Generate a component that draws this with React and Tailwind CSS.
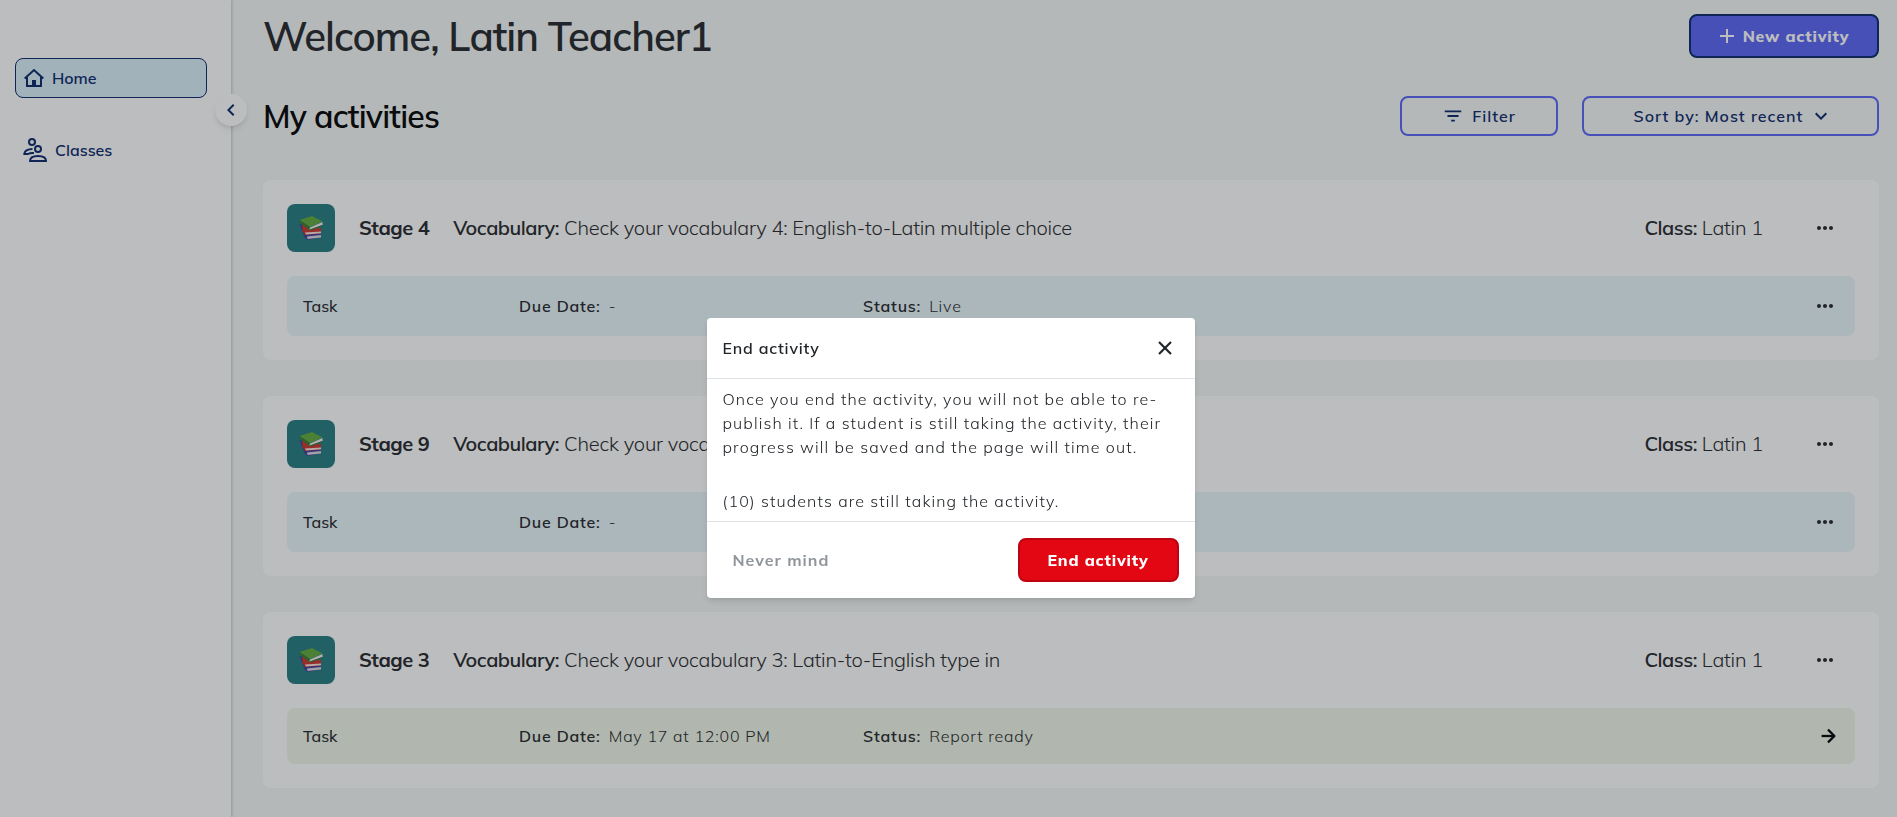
import React, { useState } from 'react';
import { ArrowRight, X } from 'lucide-react';
import { MdMoreHoriz, MdFilterList, MdAdd, MdChevronLeft, MdKeyboardArrowDown } from 'react-icons/md';

const activities = [
  {
    id: 1,
    stage: 'Stage 4',
    title: 'Check your vocabulary 4: English-to-Latin multiple choice',
    className: 'Latin 1',
    due: '-',
    status: 'Live',
    ready: false,
  },
  {
    id: 2,
    stage: 'Stage 9',
    title: 'Check your vocabulary 9',
    className: 'Latin 1',
    due: '-',
    status: '',
    ready: false,
  },
  {
    id: 3,
    stage: 'Stage 3',
    title: 'Check your vocabulary 3: Latin-to-English type in',
    className: 'Latin 1',
    due: 'May 17 at 12:00 PM',
    status: 'Report ready',
    ready: true,
  },
];

function HomeIcon() {
  return (
    <svg width="20" height="20" viewBox="0 0 20 20" fill="none" stroke="currentColor" strokeWidth="2">
      <path d="M0.7 10.4L10 2l9.3 8.4" />
      <path d="M3 9v9h14V9" />
      <path d="M8 12h4v6H8z" fill="currentColor" stroke="none" />
    </svg>
  );
}

function ClassesIcon() {
  return (
    <svg width="24" height="24" viewBox="0 0 24 24" fill="none" stroke="currentColor" strokeWidth="2">
      <circle cx="9" cy="4" r="3" />
      <circle cx="15" cy="11" r="3" />
      <path d="M7 23c0-3 3-5 8-5s8 2 8 5z" />
      <path d="M9.5 11C4.5 11 1.3 13 1.3 16H5c1.6-1 3.500-1.200 6-1" />
    </svg>
  );
}

function BooksIcon() {
  return (
    <svg width="24" height="26" viewBox="0 0 24 26">
      <path d="M.5 9L3 10l5 9 14-1v4.500L8 25 5.500 22z" fill="#3b3b94" />
      <path d="M8 21.500l14-1.500v2.500L8.500 24z" fill="#dcd6e4" />
      <path d="M3 9.500l.5 7L6.500 20 22 18.500V13L10 14z" fill="#cf2f2b" />
      <path d="M6 17.500l16-1v1.700L7 19.500z" fill="#f1e4e4" />
      <path d="M.5 5L13 1l10.500 5.500L11 12z" fill="#5fa83c" />
      <path d="M.5 5l.5 2.500L10 15l1-3z" fill="#3b7a2a" />
      <path d="M11 12.500L23.500 7v3L10.500 15z" fill="#f0efe9" />
      <path d="M10.500 14.500L23 10v1l-12.500 5z" fill="#3b7a2a" />
    </svg>
  );
}

function Sidebar() {
  return (
    <aside className="relative w-[231px] shrink-0 bg-white pl-[15px] pr-6 pt-[58px] text-[#06266b] shadow-[1px_0_3px_rgba(0,0,0,0.2)]">
      <nav className="flex flex-col gap-8">
        <a href="#home" className="flex h-10 items-center gap-2 rounded-lg border border-[#06266b] bg-[#d8effa] px-2 font-semibold">
          <HomeIcon />
          Home
        </a>
        <a href="#classes" className="flex h-10 items-center gap-2 px-2 font-semibold">
          <ClassesIcon />
          Classes
        </a>
      </nav>
      <button
        aria-label="Collapse menu"
        className="absolute -right-4 top-[94px] flex size-8 items-center justify-center rounded-full bg-white shadow-md"
      >
        <MdChevronLeft size={24} />
      </button>
    </aside>
  );
}

function ActivityCard({ activity }) {
  return (
    <article className="rounded-lg bg-white p-6">
      <div className="flex items-center gap-6 pr-[18px] text-xl">
        <div className="flex size-12 items-center justify-center rounded-lg bg-[#217b82]">
          <BooksIcon />
        </div>
        <h3 className="font-bold tracking-tight">{activity.stage}</h3>
        <p className="font-light tracking-[-0.01em]">
          <span className="font-semibold tracking-tight">Vocabulary:</span> {activity.title}
        </p>
        <p className="ml-auto mr-[26px] font-light tracking-[-0.01em]">
          <span className="font-semibold tracking-tight">Class:</span> {activity.className}
        </p>
        <button aria-label="Activity options">
          <MdMoreHoriz size={24} />
        </button>
      </div>
      <div
        className={`mt-6 flex items-center rounded-lg pl-4 tracking-wider ${
          activity.ready ? 'h-14 bg-[#eff6e8] pr-4' : 'h-[60px] bg-[#e9f6fb] pr-[18px]'
        }`}
      >
        <p className="w-[216px] font-medium tracking-normal">Task</p>
        <p className="w-[344px] font-light">
          <span className="mr-2 font-semibold">Due Date:</span>
          {activity.due}
        </p>
        {activity.status && (
          <p className="font-light">
            <span className="mr-2 font-semibold">Status:</span>
            {activity.status}
          </p>
        )}
        <button className="ml-auto" aria-label={activity.ready ? 'Open report' : 'Task options'}>
          {activity.ready ? (
            <ArrowRight size={22} strokeWidth={2.5} strokeLinecap="butt" className="text-black" />
          ) : (
            <MdMoreHoriz size={24} />
          )}
        </button>
      </div>
    </article>
  );
}

function EndActivityModal({ onClose }) {
  return (
    <div className="fixed inset-0 flex items-start justify-center bg-[#212529]/30 pl-1 pt-[318px]">
      <div role="dialog" aria-labelledby="modal-title" className="w-[488px] rounded bg-white shadow-md">
        <div className="flex h-[61px] items-center justify-between border-b border-[#dee2e6] pl-4 pr-[18px]">
          <h2 id="modal-title" className="font-semibold tracking-wider">End activity</h2>
          <button aria-label="Close" onClick={onClose}>
            <X size={24} strokeWidth={2.2} strokeLinecap="butt" />
          </button>
        </div>
        <div className="px-4 py-2 font-light leading-6 tracking-[0.07em]">
          <p>
            Once you end the activity, you will not be able to re-
            <br />
            publish it. If a student is still taking the activity, their
            <br />
            progress will be saved and the page will time out.
          </p>
          <p className="mt-[30px]">(10) students are still taking the activity.</p>
        </div>
        <div className="flex items-center justify-between border-t border-[#dee2e6] p-4">
          <button onClick={onClose} className="px-[10px] font-bold tracking-[1px] text-[#8f959b]">Never mind</button>
          <button onClick={onClose} className="h-11 w-[161px] rounded-lg border-2 border-[#bd0310] bg-[#e30613] font-extrabold tracking-wider text-white">
            End activity
          </button>
        </div>
      </div>
    </div>
  );
}

function App() {
  const [modalOpen, setModalOpen] = useState(true);

  return (
    <div className="flex min-h-screen bg-[#f4f8f8] font-['Mulish','Lato',sans-serif] text-base text-[#212529]">
      <Sidebar />
      <main className="min-w-0 flex-1 pb-6 pl-8 pr-[18px] pt-[14px]">
        <header className="flex h-11 items-center justify-between">
          <h1 className="text-[40px] font-semibold tracking-tight">Welcome, Latin Teacher1</h1>
          <button className="flex h-11 w-[190px] items-center justify-center gap-1 rounded-lg border-2 border-[#06266b] bg-[#5664f5] pr-1 font-extrabold tracking-wider text-white">
            <MdAdd size={24} />
            New activity
          </button>
        </header>

        <div className="mt-[38px] flex items-center gap-6 font-semibold tracking-[1px] text-[#06266b]">
          <h2 className="mr-auto text-[32px] font-semibold leading-10 tracking-tight text-black">My activities</h2>
          <button className="flex h-10 w-[158px] items-center justify-center gap-2 rounded-lg border-2 border-[#5664f5]">
            <MdFilterList size={22} />
            Filter
          </button>
          <button className="flex h-10 w-[297px] items-center justify-center gap-1.5 rounded-lg border-2 border-[#5664f5] pl-1.5">
            Sort by: Most recent
            <MdKeyboardArrowDown size={24} />
          </button>
        </div>

        <section className="mt-11 flex flex-col gap-9">
          {activities.map((activity) => (
            <ActivityCard key={activity.id} activity={activity} />
          ))}
        </section>
      </main>

      {modalOpen && <EndActivityModal onClose={() => setModalOpen(false)} />}
    </div>
  );
}

export default App;
